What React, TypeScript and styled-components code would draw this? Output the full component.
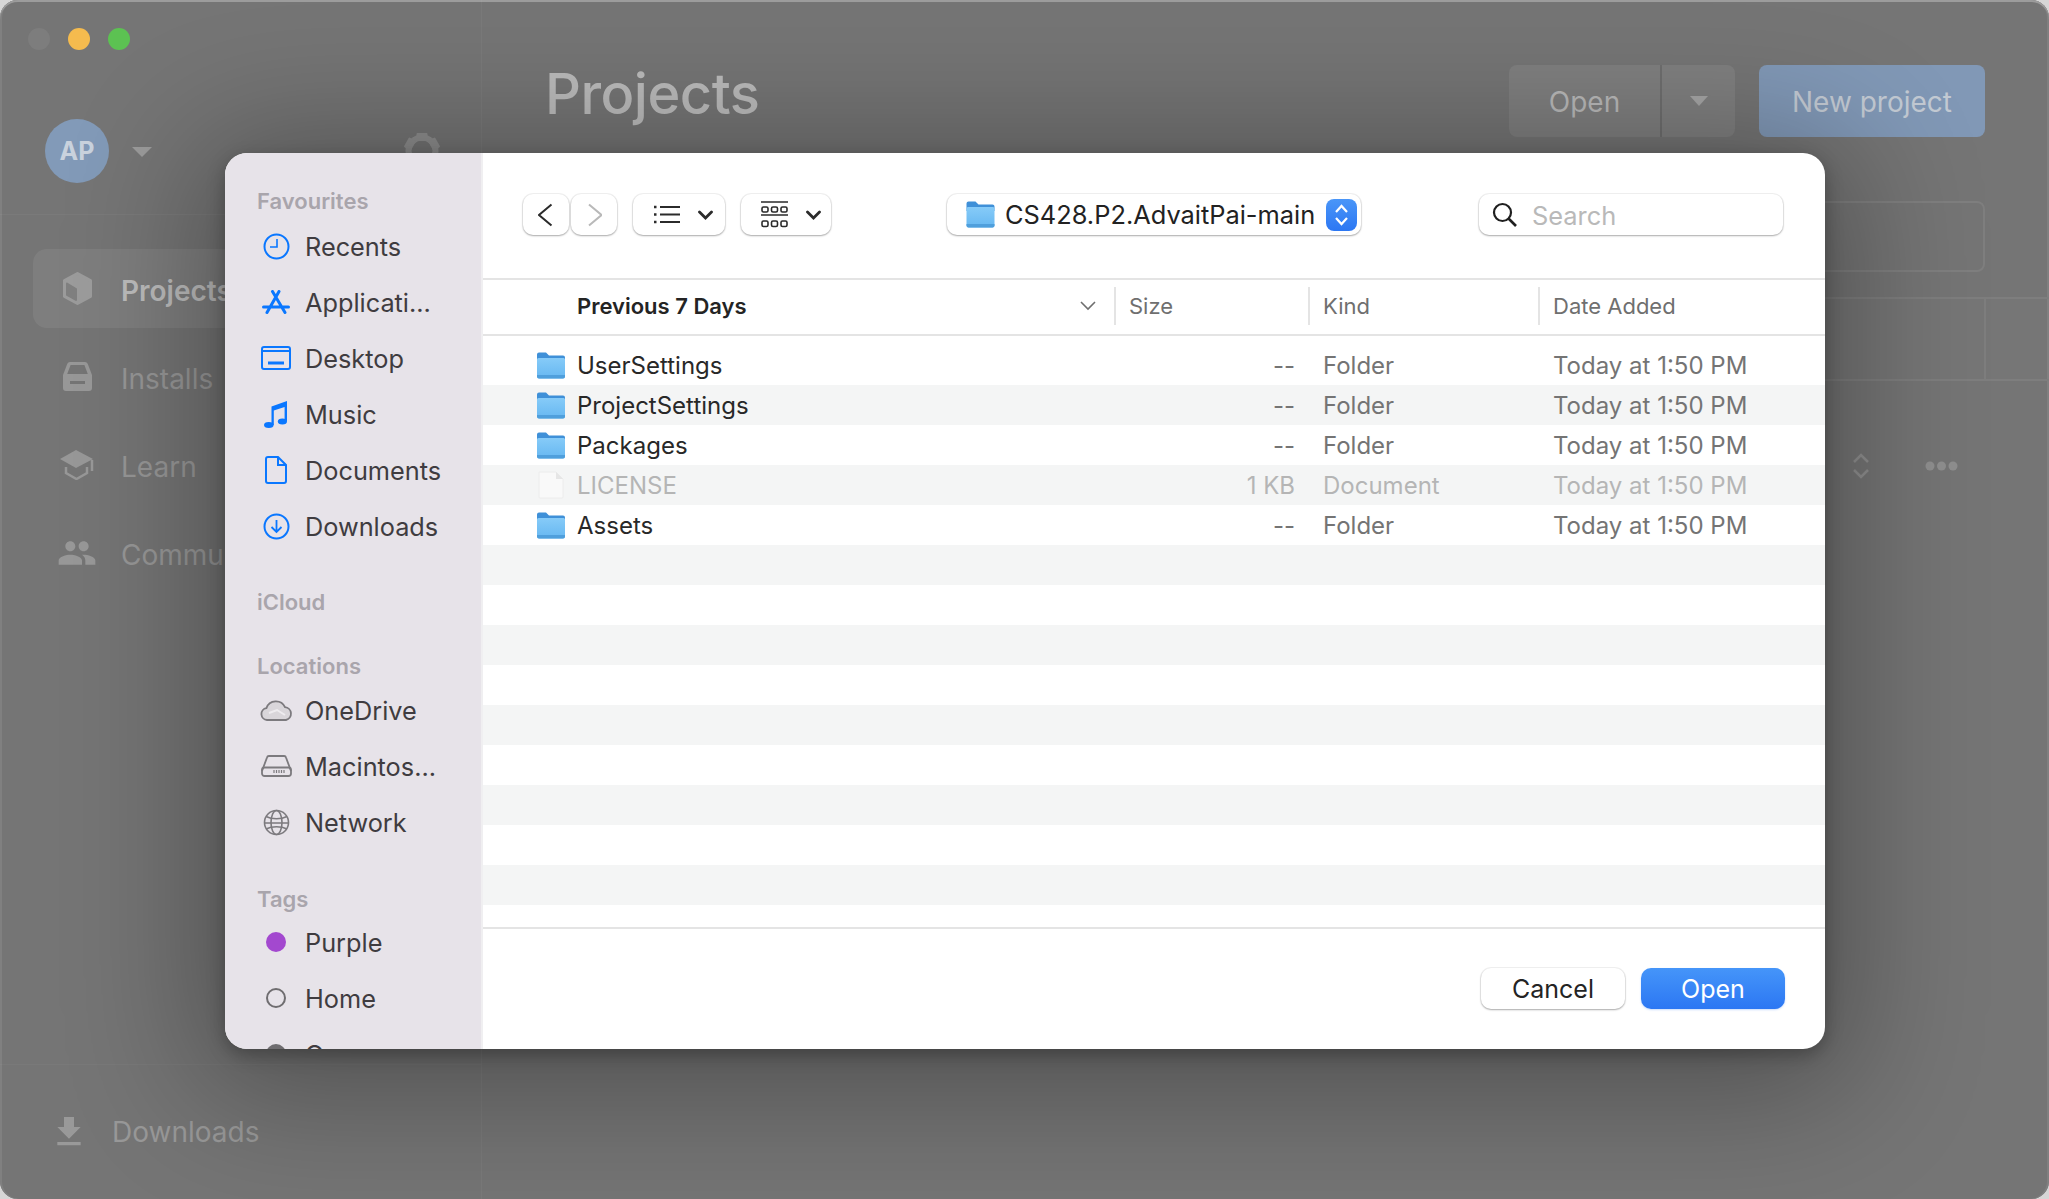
import React from 'react';
import styled, { createGlobalStyle } from 'styled-components';
import { MdFileDownload, MdPeople } from 'react-icons/md';

const GlobalStyle = createGlobalStyle`
  html, body {
    margin: 0;
    padding: 0;
    background: #d6d6d6;
    overflow: hidden;
  }
  * {
    box-sizing: border-box;
  }
  body {
    font-family: Inter, "Noto Sans", "Liberation Sans", sans-serif;
  }
`;

const HubWindow = styled.div`
  position: relative;
  display: flex;
  width: 2049px;
  height: 1199px;
  overflow: hidden;
  border-radius: 18px;
  background: #757575;
  box-shadow: inset 0 2px 0 #9c9c9c, inset 2px 0 0 #808080, inset -2px 0 0 #808080;
`;

/* the app behind the dialog */
const HubSidebar = styled.aside`
  display: flex;
  flex-direction: column;
  width: 482px;
  border-right: 1px solid rgba(255, 255, 255, 0.04);
`;
const TrafficLights = styled.div`
  display: flex;
  gap: 18px;
  height: 119px;
  padding: 28px 0 0 28px;
`;
const TrafficDot = styled.span<{ $color: string }>`
  width: 22px;
  height: 22px;
  border-radius: 50%;
  background: ${p => p.$color};
`;
const ProfileRow = styled.div`
  display: flex;
  align-items: flex-start;
  height: 96px;
  padding-left: 45px;
  border-bottom: 1px solid rgba(255, 255, 255, 0.04);
`;
const Avatar = styled.div`
  display: flex;
  align-items: center;
  justify-content: center;
  width: 64px;
  height: 64px;
  border-radius: 50%;
  background: #829ab8;
  color: #c9d2dd;
  font-size: 25px;
  font-weight: 700;
`;
const SmallCaret = styled.span`
  width: 0;
  height: 0;
  margin: 28px 0 0 23px;
  border-left: 10px solid transparent;
  border-right: 10px solid transparent;
  border-top: 10px solid #9b9b9b;
`;
const GearSlot = styled.div`
  margin: 13px 0 0 251px;
  color: #8f8f8f;
  line-height: 0;
`;
const HubNav = styled.nav`
  display: flex;
  flex-direction: column;
  gap: 9px;
  padding: 34px 0 0 33px;
`;
const HubNavItem = styled.div<{ $active?: boolean }>`
  display: flex;
  align-items: center;
  height: 79px;
  padding-left: 24px;
  border-radius: 14px 0 0 14px;
  background: ${p => (p.$active ? 'rgba(255, 255, 255, 0.07)' : 'transparent')};
  color: ${p => (p.$active ? '#bdbdbd' : '#979797')};
  font-size: 28px;
  font-weight: ${p => (p.$active ? 600 : 400)};
`;
const HubNavIcon = styled.span`
  display: flex;
  justify-content: center;
  width: 40px;
  margin-right: 24px;
  color: #989898;
`;
const HubNavLabel = styled.span`
  padding-top: 5px;
`;
const HubFooter = styled.div`
  display: flex;
  align-items: center;
  gap: 23px;
  height: 135px;
  margin-top: auto;
  padding: 0 0 0 49px;
  border-top: 1px solid rgba(255, 255, 255, 0.03);
  color: #999999;
  font-size: 28px;
`;

const HubMain = styled.main`
  flex: 1;
  display: flex;
  flex-direction: column;
`;
const HubHeader = styled.header`
  display: flex;
  align-items: center;
  justify-content: space-between;
  height: 72px;
  margin-top: 65px;
  padding: 0 64px 0 63px;
`;
const HubTitle = styled.h1`
  margin: -14px 0 0;
  color: #bbbbbb;
  font-size: 56px;
  font-weight: 500;
  letter-spacing: -0.5px;
`;
const HubActions = styled.div`
  display: flex;
  gap: 24px;
`;
const SplitButton = styled.div`
  display: flex;
  width: 226px;
  height: 72px;
  border-radius: 8px;
  background: #7f7f7f;
`;
const SplitLabel = styled.div`
  display: flex;
  align-items: center;
  justify-content: center;
  width: 153px;
  padding-top: 2px;
  border-right: 2px solid #6e6e6e;
  color: #b9b9b9;
  font-size: 28px;
`;
const SplitCaret = styled.div`
  flex: 1;
  display: flex;
  align-items: center;
  justify-content: center;
  &::after {
    content: '';
    border-left: 9px solid transparent;
    border-right: 9px solid transparent;
    border-top: 10px solid #a5a5a5;
  }
`;
const NewProjectButton = styled.div`
  display: flex;
  align-items: center;
  justify-content: center;
  width: 226px;
  height: 72px;
  padding-top: 2px;
  border-radius: 8px;
  background: #8198b6;
  color: #c3cad3;
  font-size: 28px;
`;
const HubSearch = styled.div`
  height: 71px;
  margin: 64px 64px 0 63px;
  border: 2px solid #7f7f7f;
  border-radius: 8px;
`;
const HubTableHead = styled.div`
  display: flex;
  justify-content: flex-end;
  height: 84px;
  margin-top: 25px;
  border-top: 2px solid #7e7e7e;
  border-bottom: 2px solid #7e7e7e;
  background: rgba(255, 255, 255, 0.012);
`;
const HubTableCorner = styled.div`
  width: 65px;
  border-left: 2px solid #7e7e7e;
`;
const HubRowTools = styled.div`
  display: flex;
  align-items: center;
  justify-content: flex-end;
  gap: 55px;
  height: 26px;
  margin-top: 72px;
  padding-right: 91px;
  color: #8f8f8f;
`;

/* the open-file dialog */
const Dialog = styled.div`
  position: absolute;
  left: 225px;
  top: 153px;
  display: flex;
  width: 1600px;
  height: 896px;
  overflow: hidden;
  border-radius: 22px;
  background: #ffffff;
  box-shadow: 0 6px 18px rgba(0, 0, 0, 0.28), 0 16px 130px 30px rgba(0, 0, 0, 0.3);
`;
const PlacesPane = styled.div`
  width: 258px;
  padding-top: 33px;
  border-right: 2px solid #f0eff1;
  background: #e7e3e9;
`;
const PlacesSection = styled.section<{ $top: number }>`
  margin-top: ${p => p.$top}px;
`;
const PlacesLabel = styled.div`
  height: 28px;
  padding-left: 32px;
  color: #a9a5ac;
  font-size: 22px;
  font-weight: 600;
  line-height: 30px;
`;
const PlacesList = styled.div<{ $offset: number }>`
  margin-top: ${p => p.$offset}px;
`;
const PlaceRow = styled.div`
  display: flex;
  align-items: center;
  height: 56px;
  padding-left: 32px;
  color: #3f3c40;
  font-size: 25.3px;
`;
const PlaceIcon = styled.span`
  display: flex;
  justify-content: center;
  width: 38px;
  margin-right: 10px;
`;
const TagDot = styled.span<{ $filled?: boolean; $color: string }>`
  width: 20px;
  height: 20px;
  border-radius: 50%;
  background: ${p => (p.$filled ? p.$color : 'transparent')};
  border: ${p => (p.$filled ? 'none' : `2px solid ${p.$color}`)};
`;

const BrowserPane = styled.div`
  flex: 1;
  display: flex;
  flex-direction: column;
`;
const Toolbar = styled.div`
  display: flex;
  align-items: flex-start;
  height: 127px;
  padding: 41px 42px 0 40px;
  border-bottom: 2px solid #e4e4e4;
`;
const ToolButton = styled.div<{ $width: number; $gap: number }>`
  display: flex;
  align-items: center;
  justify-content: center;
  width: ${p => p.$width}px;
  height: 41px;
  margin-right: ${p => p.$gap}px;
  border-radius: 10px;
  background: #ffffff;
  box-shadow: 0 1px 2px rgba(0, 0, 0, 0.3), 0 0 0 1px rgba(0, 0, 0, 0.05);
  color: #2b2b2b;
`;
const ViewMenuButton = styled(ToolButton)`
  gap: 18px;
  padding-left: 9px;
`;
const PathButton = styled(ToolButton)`
  justify-content: flex-start;
  gap: 10px;
  margin-left: 116px;
  padding: 0 4px 0 19px;
  color: #222222;
  font-size: 25.4px;
  white-space: nowrap;
`;
const PathStepper = styled.span`
  display: flex;
  align-items: center;
  justify-content: center;
  width: 31px;
  height: 32px;
  margin-left: auto;
  border-radius: 8px;
  background: linear-gradient(#4a96f8, #2c77f3);
`;
const SearchField = styled.div`
  display: flex;
  align-items: center;
  gap: 14px;
  width: 304px;
  height: 41px;
  margin-left: auto;
  padding: 1px 0 0 13px;
  border-radius: 10px;
  background: #ffffff;
  box-shadow: 0 1px 2px rgba(0, 0, 0, 0.3), 0 0 0 1px rgba(0, 0, 0, 0.05);
  color: #b9b9b9;
  font-size: 25.4px;
`;
const ColumnHead = styled.div`
  display: grid;
  grid-template-columns: 631px 194px 230px 1fr;
  align-items: center;
  height: 56px;
  padding-bottom: 2px;
  border-bottom: 2px solid #e4e4e4;
  color: #6f6f6f;
  font-size: 22px;
`;
const NameHead = styled.div`
  display: flex;
  align-items: center;
  justify-content: space-between;
  padding: 0 18px 0 94px;
  color: #242424;
  font-weight: 600;
`;
const ColumnCell = styled.div`
  display: flex;
  align-items: center;
  height: 38px;
  padding-left: 13px;
  border-left: 2px solid #e4e4e4;
`;
const FileList = styled.div`
  flex: 1;
  padding-top: 9px;
`;
const FileRow = styled.div<{ $striped: boolean; $dimmed?: boolean }>`
  display: grid;
  grid-template-columns: 631px 194px 230px 1fr;
  align-items: center;
  height: 40px;
  background: ${p => (p.$striped ? '#f4f5f5' : '#ffffff')};
  color: ${p => (p.$dimmed ? '#b5b5b5' : '#747474')};
  font-size: 24px;
`;
const FileName = styled.div<{ $dimmed?: boolean }>`
  display: flex;
  align-items: center;
  gap: 12px;
  padding-left: 54px;
  color: ${p => (p.$dimmed ? '#b5b5b5' : '#282828')};
`;
const FileSize = styled.div`
  padding-right: 13px;
  text-align: right;
`;
const FileColumn = styled.div`
  padding-left: 15px;
`;
const DialogFooter = styled.div`
  display: flex;
  justify-content: flex-end;
  gap: 16px;
  height: 122px;
  padding: 39px 40px 0 0;
  border-top: 2px solid #e4e4e4;
`;
const DialogButton = styled.div<{ $primary?: boolean }>`
  display: flex;
  align-items: center;
  justify-content: center;
  width: 144px;
  height: 41px;
  border-radius: 10px;
  background: ${p => (p.$primary ? 'linear-gradient(#4595f9, #2c77f3)' : '#ffffff')};
  box-shadow: ${p => (p.$primary ? '0 1px 2px rgba(44, 119, 243, 0.25)' : '0 1px 2px rgba(0, 0, 0, 0.3), 0 0 0 1px rgba(0, 0, 0, 0.05)')};
  color: ${p => (p.$primary ? '#ffffff' : '#242424')};
  font-size: 25px;
`;

const BLUE = '#0a77ff';
const GREY = '#7c7a7e';

const FolderIcon = ({ width = 28, height = 27 }: { width?: number; height?: number }) => (
  <svg width={width} height={height} viewBox="0 0 28 27">
    <defs>
      <linearGradient id="folderBody" x1="0" y1="0" x2="0" y2="1">
        <stop offset="0" stopColor="#86cbf8" />
        <stop offset="1" stopColor="#66b7f1" />
      </linearGradient>
    </defs>
    <path d="M0 2.5A2 2 0 0 1 2 .5h7l3 3h14a2 2 0 0 1 2 2V10H0z" fill="#3f90d8" />
    <path d="M0 7.5a1.5 1.5 0 0 1 1.5-1.5h25A1.5 1.5 0 0 1 28 7.5v17a2 2 0 0 1-2 2H2a2 2 0 0 1-2-2z" fill="url(#folderBody)" />
    <path d="M0 23h28v1.5a2 2 0 0 1-2 2H2a2 2 0 0 1-2-2z" fill="#4f9fdc" />
  </svg>
);

const FileIcon = () => (
  <svg width={28} height={28} viewBox="0 0 28 28">
    <path d="M2 1h17l7 7v18a1 1 0 0 1-1 1H3a1 1 0 0 1-1-1z" fill="#f9f9f9" stroke="#ececec" />
    <path d="M19 1v7h7z" fill="#e6e6e6" />
  </svg>
);

const GearIcon = () => (
  <svg width={38} height={38} viewBox="0 0 38 38" fill="currentColor">
    <circle cx={19} cy={19} r={13.500} fill="none" stroke="currentColor" strokeWidth={6} />
    {[0, 60, 120, 180, 240, 300].map(angle => (
      <rect key={angle} x={13.500} y={1} width={11} height={8} rx={1} transform={`rotate(${angle} 19 19)`} />
    ))}
  </svg>
);

const ViewChevron = () => (
  <svg width={15} height={10} viewBox="0 0 15 10" fill="none" stroke="#2b2b2b" strokeWidth={2.8} strokeLinecap="round">
    <path d="M1.500 2l6 6 6-6" />
  </svg>
);

const sidebarIcons: Record<string, React.ReactNode> = {
  Recents: (
    <svg width={27} height={27} viewBox="0 0 27 27" fill="none" stroke={BLUE} strokeWidth={2}>
      <circle cx={13.5} cy={13.5} r={12} />
      <path d="M14 6v8H7" strokeWidth={1.6} />
    </svg>
  ),
  'Applicati...': (
    <svg width={28} height={24} viewBox="0 0 28 24" fill="none" stroke={BLUE} strokeWidth={3} strokeLinecap="round">
      <path d="M10.500 1.500L23 22.500M17 1.500L5 22.500M1.500 17h25" />
    </svg>
  ),
  Desktop: (
    <svg width={30} height={24} viewBox="0 0 30 24" fill="none" stroke={BLUE} strokeWidth={2}>
      <rect x={1} y={1} width={28} height={22} rx={2} />
      <path d="M1 5h28" />
      <path d="M7 17h16" strokeWidth={3} />
    </svg>
  ),
  Music: (
    <svg width={24} height={28} viewBox="0 0 24 28" fill={BLUE}>
      <path d="M7.5 6.5L23 1v20h-2.4V7L9.8 10.5V25H7.5z" />
      <ellipse cx={4.8} cy={25} rx={4.8} ry={3} />
      <ellipse cx={18.4} cy={21.5} rx={4.6} ry={3} />
    </svg>
  ),
  Documents: (
    <svg width={22} height={28} viewBox="0 0 22 28" fill="none" stroke={BLUE} strokeWidth={2}>
      <path d="M3 1h10l8 8v16a2 2 0 0 1-2 2H3a2 2 0 0 1-2-2V3a2 2 0 0 1 2-2z" />
      <path d="M13 1v8h8" />
    </svg>
  ),
  Downloads: (
    <svg width={27} height={27} viewBox="0 0 27 27" fill="none" stroke={BLUE} strokeWidth={2}>
      <circle cx={13.5} cy={13.5} r={12} />
      <path d="M13.5 7v12M8.5 14l5 5 5-5" strokeWidth={1.8} />
    </svg>
  ),
  OneDrive: (
    <svg width={33} height={22} viewBox="0 0 33 22" fill="none" stroke={GREY} strokeWidth={1.8}>
      <path d="M7 21a6 6 0 0 1-.6-11.9A10 10 0 0 1 25 8.2 6.5 6.5 0 0 1 26 21z" fill="#d9d6da" />
      <path d="M9 14l8-3 8 5" stroke="#eeecef" strokeWidth={2} />
    </svg>
  ),
  'Macintos...': (
    <svg width={31} height={22} viewBox="0 0 31 22" fill="none" stroke={GREY} strokeWidth={1.8}>
      <path d="M1 16L6 2.5A2 2 0 0 1 8 1h15a2 2 0 0 1 2 1.5L30 16" />
      <rect x={1} y={12.5} width={29} height={8.5} rx={2.5} />
      <path d="M13 15v3M15.5 15v3M18 15v3M20.5 15v3M23 15v3" strokeWidth={1.2} />
    </svg>
  ),
  Network: (
    <svg width={27} height={27} viewBox="0 0 27 27" fill="none" stroke={GREY} strokeWidth={1.6}>
      <circle cx={13.5} cy={13.5} r={12} />
      <ellipse cx={13.5} cy={13.5} rx={5.5} ry={12} />
      <path d="M3 7.5c6 3 15 3 21 0M1.5 14h24M3 20c6-3 15-3 21 0" />
    </svg>
  ),
};

const favourites = ['Recents', 'Applicati...', 'Desktop', 'Music', 'Documents', 'Downloads'];
const locations = ['OneDrive', 'Macintos...', 'Network'];
const files = [
  { name: 'UserSettings', size: '--', kind: 'Folder' },
  { name: 'ProjectSettings', size: '--', kind: 'Folder' },
  { name: 'Packages', size: '--', kind: 'Folder' },
  { name: 'LICENSE', size: '1 KB', kind: 'Document', dimmed: true },
  { name: 'Assets', size: '--', kind: 'Folder' },
];
const TOTAL_ROWS = 14;

const App = () => {
  return (
    <HubWindow>
      <GlobalStyle />
      <HubSidebar>
        <TrafficLights>
          <TrafficDot $color="#7d7d7d" />
          <TrafficDot $color="#f5bb4e" />
          <TrafficDot $color="#5cc252" />
        </TrafficLights>
        <ProfileRow>
          <Avatar>AP</Avatar>
          <SmallCaret />
          <GearSlot>
            <GearIcon />
          </GearSlot>
        </ProfileRow>
        <HubNav>
          <HubNavItem $active>
            <HubNavIcon>
              <svg width={29} height={33} viewBox="0 0 29 33">
                <path d="M14.500 1.500L27.500 8.500v16L14.500 31.500 1.500 24.500v-16z" fill="#9c9c9c" stroke="#9c9c9c" strokeWidth={3} strokeLinejoin="round" />
                <path d="M4 11.500l9 5.500v11l-9-5z" fill="#808080" stroke="#808080" strokeWidth={2} strokeLinejoin="round" />
              </svg>
            </HubNavIcon>
            <HubNavLabel>Projects</HubNavLabel>
          </HubNavItem>
          <HubNavItem>
            <HubNavIcon>
              <svg width={29} height={29} viewBox="0 0 29 29" fill="#989898">
                <path fillRule="evenodd" d="M7 0h15a3 3 0 0 1 2.7 1.7L29 13v13a3 3 0 0 1-3 3H3a3 3 0 0 1-3-3V13L4.300 1.700A3 3 0 0 1 7 0zm.6 3L4.200 12h20.600L21.400 3zM7 19v3h15v-3z" />
              </svg>
            </HubNavIcon>
            <HubNavLabel>Installs</HubNavLabel>
          </HubNavItem>
          <HubNavItem>
            <HubNavIcon>
              <svg width={34} height={30} viewBox="0 0 34 30">
                <path d="M0 9L16 0l17 9-17 9z" fill="#989898" />
                <path d="M6 17v6l10.500 6 10.500-6v-6M32 10v11" fill="none" stroke="#989898" strokeWidth={2.5} />
              </svg>
            </HubNavIcon>
            <HubNavLabel>Learn</HubNavLabel>
          </HubNavItem>
          <HubNavItem>
            <HubNavIcon>
              <MdPeople size={40} />
            </HubNavIcon>
            <HubNavLabel>Community</HubNavLabel>
          </HubNavItem>
        </HubNav>
        <HubFooter>
          <MdFileDownload size={40} />
          Downloads
        </HubFooter>
      </HubSidebar>

      <HubMain>
        <HubHeader>
          <HubTitle>Projects</HubTitle>
          <HubActions>
            <SplitButton>
              <SplitLabel>Open</SplitLabel>
              <SplitCaret />
            </SplitButton>
            <NewProjectButton>New project</NewProjectButton>
          </HubActions>
        </HubHeader>
        <HubSearch />
        <HubTableHead>
          <HubTableCorner />
        </HubTableHead>
        <HubRowTools>
          <svg width={18} height={26} viewBox="0 0 18 26" fill="none" stroke="currentColor" strokeWidth={2.5}>
            <path d="M2 9l7-7 7 7M2 17l7 7 7-7" />
          </svg>
          <svg width={33} height={10} viewBox="0 0 33 10" fill="currentColor">
            <circle cx={5} cy={5} r={4.500} />
            <circle cx={16.500} cy={5} r={4.500} />
            <circle cx={28} cy={5} r={4.500} />
          </svg>
        </HubRowTools>
      </HubMain>

      <Dialog>
        <PlacesPane>
          <PlacesSection $top={0}>
            <PlacesLabel>Favourites</PlacesLabel>
            <PlacesList $offset={4}>
              {favourites.map(name => (
                <PlaceRow key={name}>
                  <PlaceIcon>{sidebarIcons[name]}</PlaceIcon>
                  {name}
                </PlaceRow>
              ))}
            </PlacesList>
          </PlacesSection>
          <PlacesSection $top={33}>
            <PlacesLabel>iCloud</PlacesLabel>
          </PlacesSection>
          <PlacesSection $top={36}>
            <PlacesLabel>Locations</PlacesLabel>
            <PlacesList $offset={3}>
              {locations.map(name => (
                <PlaceRow key={name}>
                  <PlaceIcon>{sidebarIcons[name]}</PlaceIcon>
                  {name}
                </PlaceRow>
              ))}
            </PlacesList>
          </PlacesSection>
          <PlacesSection $top={34}>
            <PlacesLabel>Tags</PlacesLabel>
            <PlacesList $offset={2}>
              <PlaceRow>
                <PlaceIcon>
                  <TagDot $filled $color="#a348cf" />
                </PlaceIcon>
                Purple
              </PlaceRow>
              <PlaceRow>
                <PlaceIcon>
                  <TagDot $color="#6f6d70" />
                </PlaceIcon>
                Home
              </PlaceRow>
              <PlaceRow>
                <PlaceIcon>
                  <TagDot $filled $color="#6f6d70" />
                </PlaceIcon>
                Grey
              </PlaceRow>
            </PlacesList>
          </PlacesSection>
        </PlacesPane>

        <BrowserPane>
          <Toolbar>
            <ToolButton $width={46} $gap={2}>
              <svg width={16} height={24} viewBox="0 0 16 24" fill="none" stroke="#2b2b2b" strokeWidth={2}>
                <path d="M13.500 1.500L1 12l12.500 10.500" />
              </svg>
            </ToolButton>
            <ToolButton $width={46} $gap={16}>
              <svg width={16} height={24} viewBox="0 0 16 24" fill="none" stroke="#b9b9b9" strokeWidth={2}>
                <path d="M3 1.500L15.500 12 3 22.500" />
              </svg>
            </ToolButton>
            <ViewMenuButton $width={92} $gap={16}>
              <svg width={26} height={19} viewBox="0 0 26 19" fill="none" stroke="#2b2b2b" strokeWidth={2}>
                <path d="M6 2h20M6 9.500h20M6 17h20" />
                <path d="M0 2h2.500M0 9.500h2.500M0 17h2.500" strokeWidth={2.6} />
              </svg>
              <ViewChevron />
            </ViewMenuButton>
            <ViewMenuButton $width={90} $gap={0}>
              <svg width={27} height={27} viewBox="0 0 27 27" fill="none" stroke="#2b2b2b" strokeWidth={1.6}>
                <path d="M0 1h27M0 14h27" />
                <rect x={1} y={6} width={6} height={5} rx={1.5} />
                <rect x={10.500} y={6} width={6} height={5} rx={1.5} />
                <rect x={20} y={6} width={6} height={5} rx={1.5} />
                <rect x={1} y={20} width={6} height={5.500} rx={1.5} />
                <rect x={10.500} y={20} width={6} height={5.500} rx={1.5} />
                <rect x={20} y={20} width={6} height={5.500} rx={1.5} />
              </svg>
              <ViewChevron />
            </ViewMenuButton>
            <PathButton $width={414} $gap={0}>
              <FolderIcon width={29} height={27} />
              CS428.P2.AdvaitPai-main
              <PathStepper>
                <svg width={17} height={26} viewBox="0 0 17 26" fill="none" stroke="#ffffff" strokeWidth={2.2}>
                  <path d="M3 10l5.500-6 5.500 6M3 16l5.500 6 5.500-6" />
                </svg>
              </PathStepper>
            </PathButton>
            <SearchField>
              <svg width={26} height={26} viewBox="0 0 26 26" fill="none" stroke="#1f1f1f" strokeWidth={2.2}>
                <circle cx={10.500} cy={10.500} r={8.500} />
                <path d="M16.500 16.500l7.500 7.500" strokeWidth={2.600} />
              </svg>
              Search
            </SearchField>
          </Toolbar>

          <ColumnHead>
            <NameHead>
              Previous 7 Days
              <svg width={16} height={10} viewBox="0 0 16 10" fill="none" stroke="#6f6f6f" strokeWidth={1.6}>
                <path d="M1 1l7 7 7-7" />
              </svg>
            </NameHead>
            <ColumnCell>Size</ColumnCell>
            <ColumnCell>Kind</ColumnCell>
            <ColumnCell>Date Added</ColumnCell>
          </ColumnHead>

          <FileList>
            {Array.from({ length: TOTAL_ROWS }, (_, i) => {
              const file = files[i];
              return (
                <FileRow key={i} $striped={i % 2 === 1} $dimmed={file?.dimmed}>
                  {file && (
                    <>
                      <FileName $dimmed={file.dimmed}>
                        {file.dimmed ? <FileIcon /> : <FolderIcon />}
                        {file.name}
                      </FileName>
                      <FileSize>{file.size}</FileSize>
                      <FileColumn>{file.kind}</FileColumn>
                      <FileColumn>Today at 1:50 PM</FileColumn>
                    </>
                  )}
                </FileRow>
              );
            })}
          </FileList>

          <DialogFooter>
            <DialogButton>Cancel</DialogButton>
            <DialogButton $primary>Open</DialogButton>
          </DialogFooter>
        </BrowserPane>
      </Dialog>
    </HubWindow>
  );
};

export default App;
